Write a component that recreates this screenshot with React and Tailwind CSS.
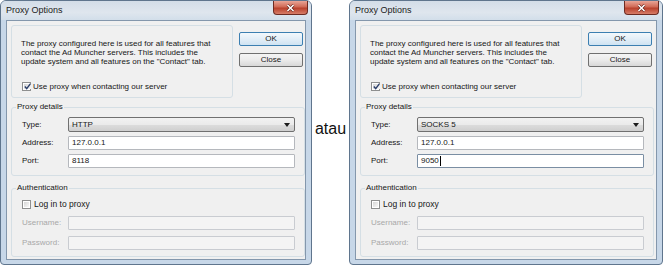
import React from 'react'

const Check = ({ checked }) => (
  <span className="w-[9px] h-[9px] shrink-0 border border-[#8e8f8f] bg-white p-[1px] flex">
    <span className="flex-1 flex items-center justify-center bg-gradient-to-br from-[#d6d6d6] to-[#f8f8f8]">
      {checked && (
        <svg width="7" height="7" viewBox="0 0 7 7">
          <path d="M0.8 3.6 L2.7 5.6 L6.3 0.9" stroke="#2b3f6b" strokeWidth="1.4" fill="none" />
        </svg>
      )}
    </span>
  </span>
)

const Field = ({ label, value, disabled, focused }) => (
  <div className="flex items-center">
    <span className={disabled ? 'w-[46px] text-[#a8a8a8]' : 'w-[46px] text-[#161616]'}>{label}</span>
    <div
      className={
        disabled
          ? 'w-[227px] h-[14px] border border-[#c9ccd1] rounded-[1px] bg-[#f4f4f4]'
          : focused
          ? 'w-[227px] h-[14px] border border-[#7a8ea3] rounded-[1px] bg-white flex items-center pl-[3px] text-[#161616]'
          : 'w-[227px] h-[14px] border border-[#b5b8bd] rounded-[1px] bg-white flex items-center pl-[3px] text-[#161616]'
      }
    >
      {value}
      {focused && <span className="w-px h-[10px] bg-black ml-px" />}
    </div>
  </div>
)

const Dialog = ({ type, port, focused, wide }) => (
  <div
    className={
      (wide ? 'w-[314px] ' : 'w-[312px] ') +
      'h-[265px] shrink-0 flex flex-col rounded-t-[6px] rounded-b-[4px] border border-[#5f758d] bg-[#c7d7e8]'
    }
  >
    <div className="h-[19px] flex items-start justify-between pl-[5px] pr-[3px] rounded-t-[5px] bg-[linear-gradient(180deg,#d3dde8_0%,#dfe6ee_60%,#d2deea_100%)]">
      <span className="text-[9px] leading-[11px] mt-[4px] text-[#1b1b1b]">Proxy Options</span>
      <div className="w-[35px] h-[14px] rounded-b-[4px] border border-t-0 border-[#6d2b22] bg-[linear-gradient(180deg,#e9a596_0%,#d06a56_45%,#b9412c_55%,#d77d68_100%)] flex items-center justify-center">
        <svg width="9" height="8" viewBox="0 0 9 8">
          <path d="M1.5 1 L7.5 7 M7.5 1 L1.5 7" stroke="#5a1d14" strokeWidth="2.6" />
          <path d="M1.5 1 L7.5 7 M7.5 1 L1.5 7" stroke="#ffffff" strokeWidth="1.6" />
        </svg>
      </div>
    </div>
    <div className="flex-1 mx-[5px] mb-[4px] border border-[#8497ac] bg-[#f0f0f0] pl-[4px] pt-[4px] flex flex-col">
      <div className="flex items-start">
        <div className="w-[222px] h-[73px] border border-[#d5dfe5] rounded-[3px] pl-[9px] pt-[13px] leading-[9px] text-[#161616]">
          <p className="whitespace-nowrap">
            The proxy configured here is used for all features that
            <br />
            contact the Ad Muncher servers. This includes the
            <br />
            update system and all features on the "Contact" tab.
          </p>
          <div className="flex items-center gap-[2px] ml-px mt-[15px] h-[10px]">
            <Check checked />
            <span>Use proxy when contacting our server</span>
          </div>
        </div>
        <div className="ml-[6px] mt-[7px] w-[64px] flex flex-col gap-[7px] text-[#161616]">
          <div className="h-[14px] rounded-[2px] border border-[#3c7fb1] bg-[linear-gradient(180deg,#f3f8fc_0%,#e3eef7_50%,#cfe3f2_100%)] flex items-center justify-center">
            OK
          </div>
          <div className="h-[14px] rounded-[2px] border border-[#707070] bg-[linear-gradient(180deg,#f4f4f4_0%,#ebebeb_50%,#d8d8d8_100%)] flex items-center justify-center">
            Close
          </div>
        </div>
      </div>

      <fieldset className="w-[294px] mt-[4px] border border-[#d5dfe5] rounded-[3px] px-[4px] pt-[5px] pb-[7px]">
        <legend className="px-px leading-[10px] text-[#161616]">Proxy details</legend>
        <div className="pl-[6px] flex flex-col gap-[4px]">
          <div className="flex items-center">
            <span className="w-[46px] text-[#161616]">Type:</span>
            <div className="w-[227px] h-[15px] rounded-[2px] border border-[#707070] bg-[linear-gradient(180deg,#f2f2f2_0%,#ebebeb_50%,#dddddd_51%,#cfcfcf_100%)] flex items-center justify-between pl-[3px] pr-[4px] text-[#161616]">
              <span>{type}</span>
              <svg width="6" height="4" viewBox="0 0 6 4">
                <path d="M0 0 H6 L3 4 Z" fill="#1c1c1c" />
              </svg>
            </div>
          </div>
          <Field label="Address:" value="127.0.0.1" />
          <Field label="Port:" value={port} focused={focused} />
        </div>
      </fieldset>

      <fieldset className="w-[294px] mt-[7px] border border-[#d5dfe5] rounded-[3px] px-[4px] pt-[6px] pb-[6px]">
        <legend className="px-px leading-[10px] text-[#161616]">Authentication</legend>
        <div className="pl-[6px] flex flex-col">
          <div className="flex items-center gap-[3px] h-[11px] text-[#161616]">
            <Check />
            <span className="text-[8.5px]">Log in to proxy</span>
          </div>
          <div className="mt-[6px] flex flex-col gap-[6px]">
            <Field label="Username:" disabled />
            <Field label="Password:" disabled />
          </div>
        </div>
      </fieldset>
    </div>
  </div>
)

export default function App() {
  return (
    <div className="w-[663px] h-[270px] bg-white flex overflow-hidden font-['Liberation_Sans',Arial,sans-serif] text-[8px]">
      <Dialog type="HTTP" port="8118" />
      <div className="w-[37px] shrink-0 flex justify-center">
        <span className="mt-[120px] text-[16px] leading-[18px] text-[#111]">atau</span>
      </div>
      <Dialog type="SOCKS 5" port="9050" focused wide />
    </div>
  )
}
